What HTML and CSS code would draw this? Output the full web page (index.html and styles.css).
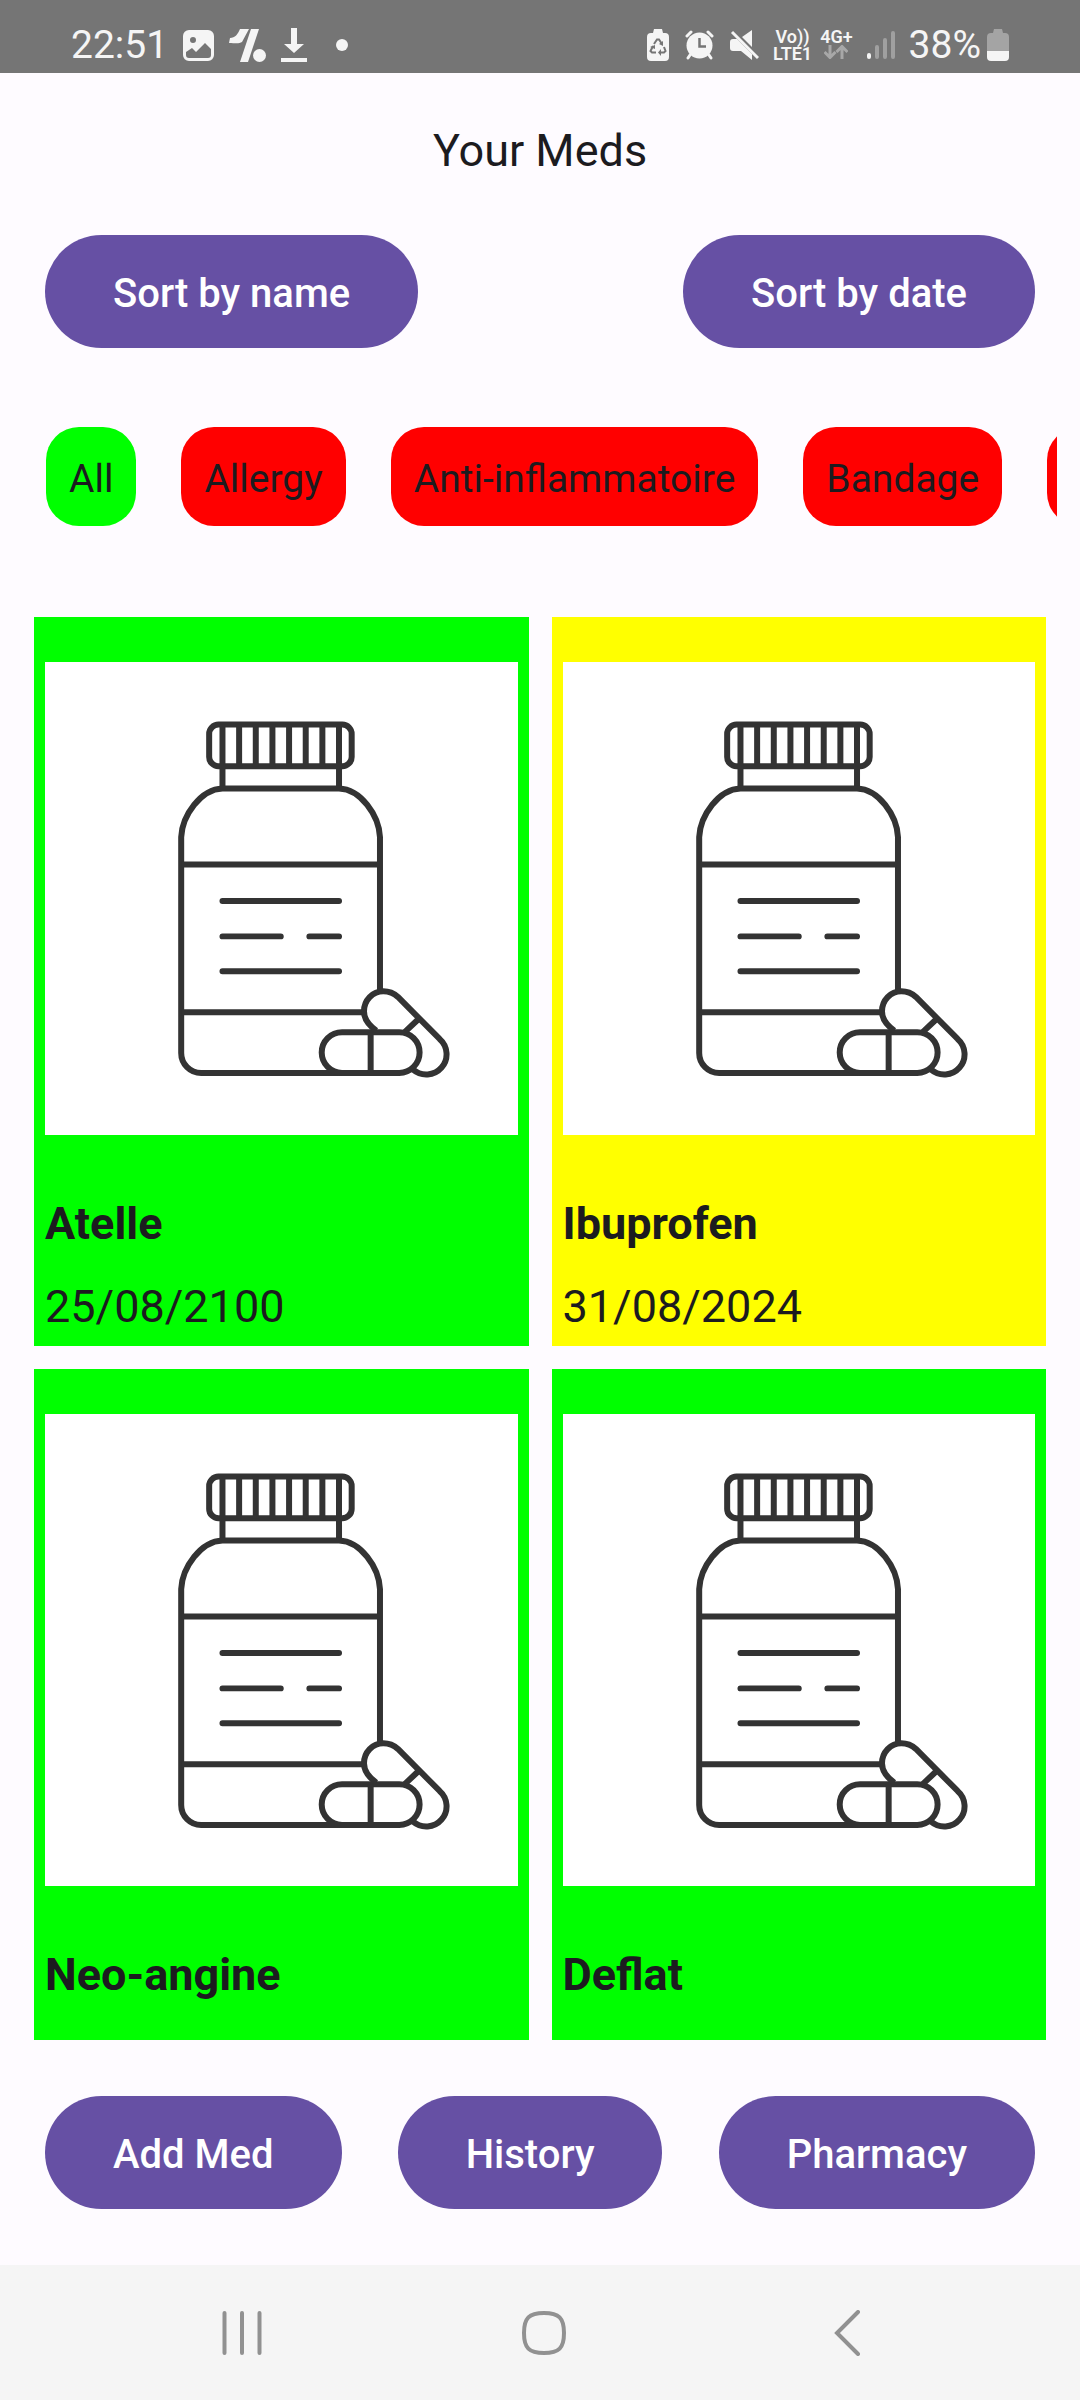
FILE: index.html
```html
<!DOCTYPE html>
<html lang="en">
<head>
<meta charset="utf-8">
<meta name="viewport" content="width=device-width, initial-scale=1">
<title>Your Meds</title>
<link rel="stylesheet" href="styles.css">
</head>
<body>
<svg class="defs" aria-hidden="true">
  <symbol id="bottle" viewBox="-343 -116 1419 1419">
    <g fill="none" stroke="#333" stroke-width="18">
      <rect x="150" y="72" width="428" height="125" rx="28"/>
      <path d="M190 72V264M240 72V197M290 72V197M340 72V197M390 72V197M440 72V197M490 72V197M540 72V264"/>
      <path d="M663 872V410C660 345 605 266 540 264H190C125 266 69 345 66 410V1058A60 60 0 0 0 126 1118H720"/>
      <path d="M66 492H663M66 936H615"/>
      <path stroke-linecap="round" d="M190 602H540M190 708H365M451 708H540M190 813H540"/>
      <rect x="488" y="996" width="294" height="122" rx="61"/>
      <path d="M635 996V1118M652 991Q615 965 615 933A58 60 0 0 1 673 873Q698 873 717 890L842 1016A60 60 0 0 1 762 1108M775 960L738 995"/>
    </g>
  </symbol>
</svg>

<header class="status">
  <div class="status-left">
    <span class="clock">22:51</span>
    <svg width="31" height="31" viewBox="0 0 31 31" aria-hidden="true"><path fill="#f5f5f5" fill-rule="evenodd" d="M6 0H25A6 6 0 0 1 31 6V25A6 6 0 0 1 25 31H6A6 6 0 0 1 0 25V6A6 6 0 0 1 6 0ZM10 7A3 3 0 1 0 10 13 3 3 0 1 0 10 7ZM3 22V25A3 3 0 0 0 6 28H25A3 3 0 0 0 28 25V19L22 13 13 22 9 18Z"/></svg>
    <svg width="37" height="33" viewBox="0 0 37 33" aria-hidden="true"><path fill="#f5f5f5" d="M11 0H20L13 13C10 15 6 14 0 14L1 9C6 9 9 5 11 0ZM22 0H30L19 33H11Z"/><circle cx="30.500" cy="26.500" r="6.500" fill="#f5f5f5"/></svg>
    <svg width="26" height="34" viewBox="0 0 26 34" aria-hidden="true"><path fill="#f5f5f5" d="M10 0H16V16H23L13 25 3 16H10ZM0 30H26V34H0Z"/></svg>
    <span class="dot"></span>
  </div>
  <div class="status-right">
    <div class="alerts">
      <svg width="22" height="32" viewBox="0 0 22 32" aria-hidden="true"><path fill="#f5f5f5" d="M7 0H15L16 4H18Q22 4 22 8V28Q22 32 18 32H4Q0 32 0 28V8Q0 4 4 4H6Z"/><path fill="none" stroke="#757575" stroke-width="2" d="M7 15L10 10.500H12L15 15M17 18L18.500 22 17 23.500H13M9 23.500H5L3.500 22 6 17"/><path fill="#757575" d="M16 12V17L12 15ZM14 20V27L11 23.500ZM3 18L8 16 8 20Z"/></svg>
      <svg width="29" height="30" viewBox="0 0 29 30" aria-hidden="true"><circle cx="14.500" cy="15.500" r="13" fill="#f5f5f5"/><path fill="none" stroke="#f5f5f5" stroke-width="3" stroke-linecap="round" d="M2 6L6 2M27 6L23 2M5 25L3 28M24 25L26 28"/><path fill="none" stroke="#757575" stroke-width="2.500" d="M14.500 8V16.500H21"/></svg>
      <svg width="29" height="30" viewBox="0 0 29 30" aria-hidden="true"><path fill="#f5f5f5" d="M0 12Q0 9 3 9H7L22 24V30L11 21H3Q0 21 0 18ZM12 7L22 0V17Z"/><path stroke="#f5f5f5" stroke-width="3" d="M2 2L28 28"/></svg>
    </div>
    <div class="network">
      <div class="net"><span>Vo))</span><span>LTE1</span></div>
      <div class="net"><span>4G+</span>
        <svg width="24" height="14" viewBox="0 0 24 14" aria-hidden="true"><path fill="none" stroke="#a8a8a8" stroke-width="3" d="M6 0V12M0.500 7L6 12.500 11.500 7M18 14V2M12.500 7L18 1.500 23.500 7"/></svg>
      </div>
    </div>
    <svg width="28" height="30" viewBox="0 0 28 30" aria-hidden="true"><path stroke="#f5f5f5" stroke-width="4" stroke-linecap="round" d="M2 25V27"/><path stroke="#a0a0a0" stroke-width="4" stroke-linecap="round" d="M10 17V27M18 10V27M26 3V27"/></svg>
    <div class="power">
      <span>38%</span>
      <svg width="22" height="32" viewBox="0 0 22 32" aria-hidden="true"><path fill="#a4a4a4" d="M7 0H15L16 4H18Q22 4 22 8V22H0V8Q0 4 4 4H6Z"/><path fill="#f5f5f5" d="M0 22H22V28Q22 32 18 32H4Q0 32 0 28Z"/></svg>
    </div>
  </div>
</header>

<main class="screen">
  <h1 class="title">Your Meds</h1>
  <div class="actions sort">
    <button class="btn" type="button">Sort by name</button>
    <button class="btn" type="button">Sort by date</button>
  </div>
  <div class="chips">
    <button class="chip chip-on" type="button">All</button>
    <button class="chip" type="button">Allergy</button>
    <button class="chip" type="button">Anti-inflammatoire</button>
    <button class="chip" type="button">Bandage</button>
    <button class="chip" type="button">Cream</button>
  </div>
  <section class="meds">
    <article class="card">
      <svg class="photo" viewBox="0 0 473 473" role="img" aria-label="Pill bottle"><use href="#bottle"/></svg>
      <h2 class="name">Atelle</h2>
      <p class="date">25/08/2100</p>
    </article>
    <article class="card card-soon">
      <svg class="photo" viewBox="0 0 473 473" role="img" aria-label="Pill bottle"><use href="#bottle"/></svg>
      <h2 class="name">Ibuprofen</h2>
      <p class="date">31/08/2024</p>
    </article>
    <article class="card">
      <svg class="photo" viewBox="0 0 473 473" role="img" aria-label="Pill bottle"><use href="#bottle"/></svg>
      <h2 class="name">Neo-angine</h2>
      <p class="date">25/08/2100</p>
    </article>
    <article class="card">
      <svg class="photo" viewBox="0 0 473 473" role="img" aria-label="Pill bottle"><use href="#bottle"/></svg>
      <h2 class="name">Deflat</h2>
      <p class="date">25/08/2100</p>
    </article>
  </section>
  <div class="actions bottom">
    <button class="btn" type="button">Add Med</button>
    <button class="btn" type="button">History</button>
    <button class="btn" type="button">Pharmacy</button>
  </div>
</main>

<nav class="navbar">
  <button class="nav-btn" type="button" aria-label="Recent apps"><svg width="44" height="46" viewBox="0 0 44 46"><path d="M4.500 3V43M22 3V43M39.500 3V43"/></svg></button>
  <button class="nav-btn" type="button" aria-label="Home"><svg width="46" height="46" viewBox="0 0 46 46"><path d="M23 3C38 3 43 8 43 23S38 43 23 43 3 38 3 23 8 3 23 3Z"/></svg></button>
  <button class="nav-btn" type="button" aria-label="Back"><svg width="28" height="46" viewBox="0 0 28 46"><path d="M25 2L4 23 25 44"/></svg></button>
</nav>
</body>
</html>
```
FILE: styles.css
```css
* {
  box-sizing: border-box;
}

body {
  margin: 0;
  height: 100vh;
  display: flex;
  flex-direction: column;
  background: #fefbff;
  color: #1c1b1f;
  font-family: Roboto, "Noto Sans", sans-serif;
  font-size: 45px;
  line-height: 67px;
}

svg {
  display: block;
  flex: none;
}

button {
  border: 0;
  margin: 0;
  font-family: inherit;
  white-space: nowrap;
}

.defs {
  position: absolute;
  width: 0;
  height: 0;
}

/* Status bar */
.status {
  flex: none;
  display: flex;
  justify-content: space-between;
  align-items: center;
  height: 73px;
  padding: 17px 71px 0;
  background: #757575;
  color: #f5f5f5;
  font-size: 39px;
  line-height: 46px;
}

.status-left {
  display: flex;
  align-items: center;
  gap: 15px;
}

.dot {
  width: 12px;
  height: 12px;
  margin-left: 14px;
  border-radius: 50%;
  background: #f5f5f5;
}

.status-right {
  display: flex;
  align-items: center;
  gap: 14px;
}

.alerts {
  display: flex;
  align-items: center;
  gap: 16px;
}

.network {
  display: flex;
  gap: 8px;
}

.net {
  display: flex;
  flex-direction: column;
  align-items: center;
  font-size: 18px;
  font-weight: 600;
  line-height: 17px;
}

.power {
  display: flex;
  align-items: center;
  gap: 6px;
}

/* Screen */
.screen {
  flex: 1;
  min-height: 0;
  display: flex;
  flex-direction: column;
  padding: 44px 23px 56px;
}

.title {
  margin: 0 0 51px;
  font-size: inherit;
  font-weight: 400;
  text-align: center;
}

.actions {
  flex: none;
  display: flex;
  justify-content: space-between;
  padding: 0 22px;
}

.btn {
  height: 113px;
  padding: 4px 68px 0;
  border-radius: 57px;
  background: #6650a4;
  color: #fff;
  font-size: 40px;
  font-weight: 500;
  line-height: 56px;
}

.chips {
  flex: none;
  display: flex;
  gap: 45px;
  margin: 79px 0 91px;
  padding: 0 23px;
  overflow-x: auto;
  scrollbar-width: none;
}

.chip {
  flex: none;
  height: 99px;
  padding: 4px 23px 0;
  border-radius: 33px;
  background: #f00;
  color: #1c1b1f;
  font-size: 39px;
  line-height: 56px;
}

.chip-on {
  background: #0f0;
}

.meds {
  flex: 1;
  min-height: 0;
  display: grid;
  grid-template-columns: 1fr 1fr;
  align-content: start;
  gap: 23px;
  padding: 0 11px;
  overflow-y: auto;
  scrollbar-width: none;
}

.card {
  padding: 45px 11px 6px;
  background: #0f0;
}

.card-soon {
  background: #ff0;
}

.photo {
  width: 100%;
  aspect-ratio: 1;
  background: #fff;
}

.name {
  margin: 55px 0 16px;
  font-size: inherit;
  font-weight: 700;
}

.date {
  margin: 0;
}

.bottom {
  margin-top: 56px;
}

/* System navigation */
.navbar {
  flex: none;
  display: grid;
  grid-template-columns: repeat(3, 1fr);
  justify-items: center;
  align-items: center;
  height: 135px;
  padding: 0 82px 0 91px;
  background: #f5f5f5;
}

.nav-btn {
  display: flex;
  padding: 0;
  background: none;
}

.nav-btn path {
  fill: none;
  stroke: #919191;
  stroke-width: 4;
  stroke-linecap: round;
}
```
